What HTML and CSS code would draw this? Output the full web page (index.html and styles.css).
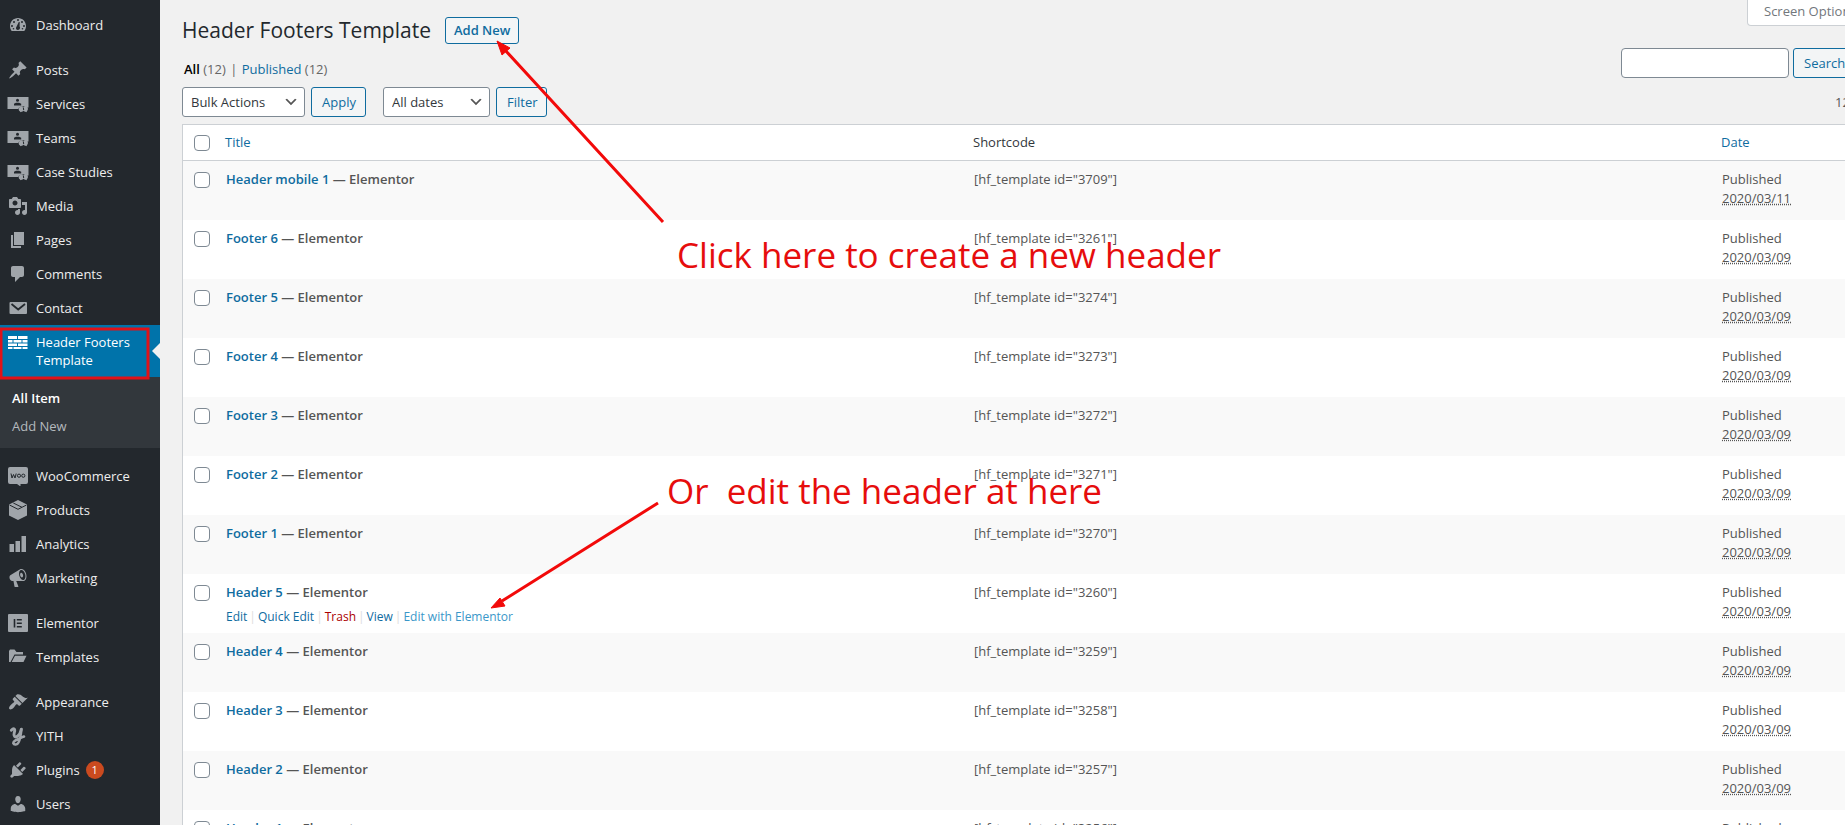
FILE: index.html
```html
<!DOCTYPE html>
<html lang="en">
<head>
<meta charset="utf-8">
<title>Header Footers Template</title>
<link rel="stylesheet" href="styles.css">
</head>
<body>
<svg class="sprite" aria-hidden="true">
  <symbol id="people" viewBox="0 0 22 20">
    <path fill-rule="evenodd" d="M.5 3h21v10.500H18.500a2.600 2.600 0 0 0-3.500-.7a3 3 0 0 0-3.700 2.200H.500z"/>
    <circle class="hole" cx="10.500" cy="6.300" r="1.500"/>
    <path class="hole" d="M7 11.500V9.800l2-1h3l2.200 1v1.700z"/>
    <circle cx="14.300" cy="15" r="2.600"/><circle cx="18.300" cy="14.800" r="2.600"/>
    <path d="M12.500 16l1 2.300 2.200-1.300zM17 17l2.700 1.300.2-2z"/>
    <path class="line" d="M16.300 13.500l.4 2.500"/>
  </symbol>
</svg>
<div class="shell">
  <nav class="sidebar" aria-label="Admin menu">
    <a class="item" href="#"><svg class="icon" viewBox="0 0 20 20"><path fill-rule="evenodd" d="M3.760 16h12.480c1.100-1.370 1.760-3.110 1.760-5 0-4.420-3.580-8-8-8s-8 3.580-8 8c0 1.890.66 3.630 1.760 5zM10 4a1 1 0 1 1 0 2 1 1 0 0 1 0-2zM6 6a1 1 0 1 1 0 2 1 1 0 0 1 0-2zM14 6a1 1 0 1 1 0 2 1 1 0 0 1 0-2zM4 10a1 1 0 1 1 0 2 1 1 0 0 1 0-2zM16 10a1 1 0 1 1 0 2 1 1 0 0 1 0-2zM10.800 7l.9.100-.1 4.500c1 .900.400 3.400-1.600 3.400s-2.600-2.200-1.500-3.300zM5.500 13a.8.800 0 1 1 0 1.600.8.800 0 0 1 0-1.600zM14.500 13a.8.800 0 1 1 0 1.600.8.800 0 0 1 0-1.600z"/></svg>Dashboard</a>
    <div class="sep"></div>
    <a class="item" href="#"><svg class="icon" viewBox="0 0 20 20"><path d="M10.440 3.020l1.820-1.820 6.360 6.350-1.830 1.820c-1.050-.68-2.480-.57-3.410.36l-.75.75c-.92.93-1.040 2.350-.35 3.410l-1.830 1.820-2.410-2.410-2.800 2.790c-.42.42-3.380 2.710-3.800 2.290s1.860-3.390 2.280-3.810l2.790-2.790L4.100 9.360l1.830-1.820c1.050.69 2.480.57 3.400-.36l.75-.75c.93-.92 1.050-2.350.36-3.410z"/></svg>Posts</a>
    <a class="item" href="#"><svg class="icon wide"><use href="#people"/></svg>Services</a>
    <a class="item" href="#"><svg class="icon wide"><use href="#people"/></svg>Teams</a>
    <a class="item" href="#"><svg class="icon wide"><use href="#people"/></svg>Case Studies</a>
    <a class="item" href="#"><svg class="icon" viewBox="0 0 20 20"><path d="M13 11V4c0-.55-.45-1-1-1h-1.670L9 1H5L3.670 3H2c-.55 0-1 .45-1 1v7c0 .55.45 1 1 1h10c.55 0 1-.45 1-1zM7 4.500c1.380 0 2.500 1.120 2.500 2.500S8.380 9.500 7 9.500 4.500 8.380 4.500 7 5.620 4.500 7 4.500zM14 6h5v10.500c0 1.380-1.120 2.500-2.500 2.500S14 17.880 14 16.500s1.120-2.500 2.500-2.500c.17 0 .34.020.5.050V9h-3V6zm-4 8.050V13h2v3.500c0 1.380-1.120 2.500-2.500 2.500S7 17.880 7 16.500 8.120 14 9.500 14c.17 0 .34.020.5.050z"/></svg>Media</a>
    <a class="item" href="#"><svg class="icon" viewBox="0 0 20 20"><path d="M6 15V2h10v13H6zm-1 1h8v2H3V5h2v11z"/></svg>Pages</a>
    <a class="item" href="#"><svg class="icon" viewBox="0 0 20 20"><path d="M5 2h9c1.100 0 2 .9 2 2v7c0 1.100-.9 2-2 2h-2l-5 5v-5H5c-1.100 0-2-.9-2-2V4c0-1.100.9-2 2-2z"/></svg>Comments</a>
    <a class="item" href="#"><svg class="icon" viewBox="0 0 20 20"><rect x="1.500" y="4" width="17.500" height="12" rx="1"/><path class="line" stroke-width="1.800" d="M3.500 6l6.700 5.500L17 6"/></svg>Contact</a>
    <a class="item current" href="#" aria-current="page"><svg class="icon" viewBox="0 0 20 20"><path d="M0 4h9v3H0zM10 4h9.500v3H10zM0 8h4.500v2.500H0zM5.500 8h8v2.500h-8zM14.500 8h5v2.500h-5zM0 11.500h9V14H0zM10 11.500h9.500V14H10zM0 15h4.500v2H0zM5.500 15h8v2h-8zM14.500 15h5v2h-5z"/></svg>Header Footers Template</a>
    <div class="submenu">
      <a class="sub active" href="#">All Item</a>
      <a class="sub" href="#">Add New</a>
    </div>
    <div class="sep"></div>
    <a class="item" href="#"><svg class="icon" viewBox="0 0 20 20"><path d="M2 1h16a2 2 0 0 1 2 2v13a2 2 0 0 1-2 2h-5.500v2.500L9 18H2a2 2 0 0 1-2-2V3a2 2 0 0 1 2-2z"/><path class="line" d="M3 7.500l1 4.500 1.500-3.500L7 12l1.200-4.500"/><circle class="line" cx="11" cy="9.700" r="1.600"/><circle class="line" cx="15.300" cy="9.700" r="1.600"/></svg>WooCommerce</a>
    <a class="item" href="#"><svg class="icon" viewBox="0 0 20 20"><path d="M10 0l9 4.500v11L10 20l-9-4.500v-11z"/><path class="line" d="M1.500 5L10 9.300 18.500 5M5.300 3l8.700 4.300"/></svg>Products</a>
    <a class="item" href="#"><svg class="icon" viewBox="0 0 20 20"><path d="M18 18V2h-4.500v16zM12 18V7H7.500v11zM6 18v-8H1.500v8z"/></svg>Analytics</a>
    <a class="item" href="#"><svg class="icon" viewBox="0 0 20 20"><path fill-rule="evenodd" d="M18.150 5.940c.46 1.620.38 3.220-.02 4.480-.42 1.280-1.260 2.180-2.300 2.480-.16.060-.26.060-.4.060-.06.020-.12.020-.18.020-.06.020-.14.020-.22.020h-6.800l2.220 5.500c.02.140-.06.260-.14.340-.08.100-.24.160-.34.160H6.950c-.1 0-.26-.06-.34-.16-.08-.08-.16-.2-.14-.34l-1-5.500H4.250l-.02-.02c-.5.060-1.080-.18-1.540-.62s-.88-1.080-1.060-1.880c-.24-.8-.2-1.560-.02-2.200.18-.62.58-1.080 1.060-1.300l.02-.02 9-5.400c.1-.06.18-.1.240-.16.060-.04.140-.08.240-.12.160-.08.280-.12.500-.18 1.040-.3 2.240.1 3.220.98s1.840 2.240 2.260 3.860zm-2.580 5.980h-.02c.4-.1.740-.34 1.040-.7.580-.7.860-1.760.860-3.040 0-.64-.1-1.300-.28-1.980-.34-1.360-1.020-2.500-1.780-3.240s-1.680-1.100-2.460-.88c-.82.220-1.400.960-1.700 2-.32 1.040-.28 2.360.060 3.720.38 1.360 1 2.500 1.800 3.240.78.740 1.620 1.100 2.480.880zm-2.540-7.080c.22-.04.42-.02.620.040.38.160.76.480 1.020 1s.42 1.200.42 1.780c0 .3-.04.560-.12.800-.18.480-.44.840-.86.940-.34.100-.8-.06-1.140-.4s-.64-.86-.78-1.500c-.18-.62-.12-1.240.02-1.720s.48-.84.820-.94z"/></svg>Marketing</a>
    <div class="sep"></div>
    <a class="item" href="#"><svg class="icon" viewBox="0 0 20 20"><path fill-rule="evenodd" d="M1 1h18a1 1 0 0 1 1 1v16a1 1 0 0 1-1 1H1a1 1 0 0 1-1-1V2a1 1 0 0 1 1-1zM5.700 6v8.500h1.600V6zM8.800 6v1.600h5V6zM8.800 9.500v1.600h5V9.500zM8.800 12.900v1.600h5v-1.600z"/></svg>Elementor</a>
    <a class="item" href="#"><svg class="icon" viewBox="0 0 20 20"><path d="M1 15V4l1-1.500h4.500L8.500 5H15v2.500H6.500L2.500 15zM7 8.700h11.500L15.500 15H3.700z"/></svg>Templates</a>
    <div class="sep"></div>
    <a class="item" href="#"><svg class="icon" viewBox="0 0 20 20"><path d="M14.480 11.060L7.410 3.990l1.500-1.500c.5-.56 2.300-.47 3.510.32 1.210.8 1.430 1.280 2.910 2.100 1.180.64 2.450 1.260 4.450.85zm-.71.71L6.700 4.700 4.930 6.470c-.39.39-.39 1.020 0 1.410l1.060 1.060c.39.39.39 1.030 0 1.420-.6.6-1.430 1.110-2.210 1.690-.35.26-.7.53-1.010.84C1.430 14.230.4 16.080 1.400 17.070c.99 1 2.840-.03 4.180-1.360.31-.31.58-.66.85-1.020.57-.78 1.080-1.610 1.690-2.210.39-.39 1.020-.39 1.410 0l1.060 1.060c.39.39 1.020.39 1.410 0z"/></svg>Appearance</a>
    <a class="item" href="#"><svg class="icon" viewBox="0 0 20 20"><path class="pen" stroke-width="2.900" d="M3.300 4.200C6 1.500 7.500 3 6.300 6.500C5.300 10 6.800 12 9.500 10.200C12 8.500 12.800 5.500 13.200 3.500"/><path class="pen" stroke-width="2.500" d="M13.500 3C13 8 12.500 13 10.500 16.500C9.200 19 6 19.200 5.300 17.300C5 15 9 13.500 16 10.500"/></svg>YITH</a>
    <a class="item" href="#"><svg class="icon" viewBox="0 0 20 20"><path d="M13.110 4.360L9.870 7.600 8 5.730l3.240-3.240c.35-.34 1.050-.2 1.560.32.52.51.66 1.210.31 1.550zm-8 1.770l.91-1.120 9.010 9.010-1.190.84c-.71.71-2.630 1.160-3.820 1.160H6.140L4.900 17.260c-.59.59-1.540.59-2.120 0-.59-.58-.59-1.530 0-2.120l1.240-1.240v-3.880c0-1.130.4-3.190 1.090-3.890zm7.260 3.970l3.240-3.240c.34-.35 1.040-.21 1.550.31.52.51.66 1.210.31 1.550l-3.240 3.250z"/></svg>Plugins<span class="badge">1</span></a>
    <a class="item" href="#"><svg class="icon" viewBox="0 0 20 20"><path d="M10 9.250c-2.270 0-2.730-3.440-2.730-3.440C7 4.020 7.820 2 9.970 2c2.160 0 2.980 2.020 2.710 3.810 0 0-.41 3.440-2.680 3.440zm0 2.570L12.720 10c2.390 0 4.520 2.330 4.520 4.530v2.490s-3.650 1.130-7.240 1.130c-3.650 0-7.240-1.130-7.240-1.130v-2.490c0-2.250 1.940-4.480 4.470-4.480z"/></svg>Users</a>
  </nav>

  <main class="content">
    <header class="top">
      <div class="heading"><h1>Header Footers Template</h1><a class="button add" href="#">Add New</a></div>
      <button class="tab" type="button">Screen Options</button>
    </header>
    <div class="views">
      <p class="counts"><a class="all" href="#">All</a> (12) <span>|</span> <a href="#">Published</a> (12)</p>
      <form class="search"><input type="search" aria-label="Search templates"><button class="button" type="button">Search</button></form>
    </div>
    <div class="filters">
      <select class="bulk" aria-label="Bulk action"><option>Bulk Actions</option></select>
      <button class="button apply" type="button">Apply</button>
      <select class="dates" aria-label="Filter by date"><option>All dates</option></select>
      <button class="button filter" type="button">Filter</button>
      <span class="total">12 items</span>
    </div>
    <table>
      <colgroup><col class="c-check"><col><col><col class="c-date"></colgroup>
      <thead><tr><th class="check"><input type="checkbox" aria-label="Select all"></th><th><a href="#">Title</a></th><th>Shortcode</th><th><a href="#">Date</a></th></tr></thead>
      <tbody>
        <tr><td class="check"><input type="checkbox" aria-label="Select Header mobile 1"></td><td class="name"><a href="#">Header mobile 1</a> — Elementor</td><td class="code">[hf_template id="3709"]</td><td>Published<br><abbr>2020/03/11</abbr></td></tr>
        <tr><td class="check"><input type="checkbox" aria-label="Select Footer 6"></td><td class="name"><a href="#">Footer 6</a> — Elementor</td><td class="code">[hf_template id="3261"]</td><td>Published<br><abbr>2020/03/09</abbr></td></tr>
        <tr><td class="check"><input type="checkbox" aria-label="Select Footer 5"></td><td class="name"><a href="#">Footer 5</a> — Elementor</td><td class="code">[hf_template id="3274"]</td><td>Published<br><abbr>2020/03/09</abbr></td></tr>
        <tr><td class="check"><input type="checkbox" aria-label="Select Footer 4"></td><td class="name"><a href="#">Footer 4</a> — Elementor</td><td class="code">[hf_template id="3273"]</td><td>Published<br><abbr>2020/03/09</abbr></td></tr>
        <tr><td class="check"><input type="checkbox" aria-label="Select Footer 3"></td><td class="name"><a href="#">Footer 3</a> — Elementor</td><td class="code">[hf_template id="3272"]</td><td>Published<br><abbr>2020/03/09</abbr></td></tr>
        <tr><td class="check"><input type="checkbox" aria-label="Select Footer 2"></td><td class="name"><a href="#">Footer 2</a> — Elementor</td><td class="code">[hf_template id="3271"]</td><td>Published<br><abbr>2020/03/09</abbr></td></tr>
        <tr><td class="check"><input type="checkbox" aria-label="Select Footer 1"></td><td class="name"><a href="#">Footer 1</a> — Elementor</td><td class="code">[hf_template id="3270"]</td><td>Published<br><abbr>2020/03/09</abbr></td></tr>
        <tr><td class="check"><input type="checkbox" aria-label="Select Header 5"></td><td class="name"><a href="#">Header 5</a> — Elementor<div class="actions"><a href="#">Edit</a><i>|</i><a href="#">Quick Edit</a><i>|</i><a class="trash" href="#">Trash</a><i>|</i><a href="#">View</a><i>|</i><a class="hover" href="#">Edit with Elementor</a></div></td><td class="code">[hf_template id="3260"]</td><td>Published<br><abbr>2020/03/09</abbr></td></tr>
        <tr><td class="check"><input type="checkbox" aria-label="Select Header 4"></td><td class="name"><a href="#">Header 4</a> — Elementor</td><td class="code">[hf_template id="3259"]</td><td>Published<br><abbr>2020/03/09</abbr></td></tr>
        <tr><td class="check"><input type="checkbox" aria-label="Select Header 3"></td><td class="name"><a href="#">Header 3</a> — Elementor</td><td class="code">[hf_template id="3258"]</td><td>Published<br><abbr>2020/03/09</abbr></td></tr>
        <tr><td class="check"><input type="checkbox" aria-label="Select Header 2"></td><td class="name"><a href="#">Header 2</a> — Elementor</td><td class="code">[hf_template id="3257"]</td><td>Published<br><abbr>2020/03/09</abbr></td></tr>
        <tr><td class="check"><input type="checkbox" aria-label="Select Header 1"></td><td class="name"><a href="#">Header 1</a> — Elementor</td><td class="code">[hf_template id="3256"]</td><td>Published<br><abbr>2020/03/09</abbr></td></tr>
      </tbody>
    </table>
  </main>
</div>
<svg class="notes" width="1300" height="700">
  <rect x="1" y="329" width="147" height="49" fill="none" stroke="#e01218" stroke-width="3"/>
  <path d="M663 222L505 50M658 503L502 601" fill="none" stroke="#f20a0a" stroke-width="3"/>
  <path class="tip" d="M497 41l13 7-8 7z"/>
  <path class="tip" d="M491 608l14-2-5-8z"/>
  <text x="677" y="268">Click here to create a new header</text>
  <text x="667" y="504">Or&nbsp; edit the header at here</text>
</svg>
</body>
</html>
```
FILE: styles.css
```css
* { box-sizing: border-box; }
body {
  margin: 0;
  height: 100vh;
  overflow: hidden;
  position: relative;
  background: #f1f1f1;
  color: #444;
  font: 13px/19px "Open Sans", "Noto Sans", sans-serif;
}
a { color: #0f6c9f; text-decoration: none; }
button, input, select { font: inherit; margin: 0; }
.sprite { position: absolute; width: 0; height: 0; }

/* The admin area runs on past the right edge of the window. */
.shell { display: flex; width: calc(100% + 75px); min-height: 100%; }

.sidebar { flex: 0 0 160px; padding-top: 8px; background: #23282d; }
.item {
  display: flex;
  align-items: flex-start;
  gap: 8px;
  padding: 8px;
  line-height: 18px;
  color: #eee;
}
.icon { flex: none; width: 20px; height: 20px; margin: -1px 0; fill: #a0a5aa; }
.icon.wide { width: 22px; margin-left: -1px; margin-right: -1px; }
.hole { fill: #23282d; }
.line { fill: none; stroke: #23282d; }
.pen { fill: none; stroke: #a0a5aa; stroke-linecap: round; }
.sep { height: 11px; }
.current { position: relative; background: #0073aa; color: #fff; }
.current .icon { fill: #fff; }
.current::after {
  content: "";
  position: absolute;
  right: 0;
  top: 50%;
  margin-top: -8px;
  border: 8px solid transparent;
  border-left: 0;
  border-right-color: #f1f1f1;
}
.submenu { padding: 7px 0 8px; background: #32373c; }
.sub { display: block; padding: 5px 12px; line-height: 18px; color: #b4b9be; }
.sub.active { color: #fff; font-weight: 600; }
.badge {
  width: 18px;
  height: 18px;
  margin-left: -2px;
  border-radius: 9px;
  background: #ca4a1f;
  color: #fff;
  font-size: 11px;
  text-align: center;
}

.content { flex: 1; min-width: 0; padding: 0 20px 0 22px; }
.top { display: flex; justify-content: space-between; align-items: flex-start; }
.heading { display: flex; align-items: center; gap: 14px; padding-top: 17px; }
h1 { margin: 0; font-size: 21px; line-height: 27px; font-weight: 400; color: #23282d; }
.button {
  height: 30px;
  padding: 0 10px;
  border: 1px solid #0f6c9f;
  border-radius: 3px;
  background: #f3f5f6;
  color: #0f6c9f;
  white-space: nowrap;
}
.button.add { height: 27px; padding: 0 8px; line-height: 25px; font-weight: 600; }
.tab {
  width: 153px;
  height: 26px;
  padding: 0 16px 2px;
  border: 1px solid #ccd0d4;
  border-top: 0;
  border-radius: 0 0 4px 4px;
  background: #fff;
  color: #72777c;
  text-align: left;
}
.views { display: flex; justify-content: space-between; align-items: flex-end; padding-top: 4px; }
.counts { margin: 0; padding-left: 2px; line-height: 18px; color: #666; }
.counts span { padding: 0 1px; }
.all { color: #000; font-weight: 600; }
.search { display: flex; gap: 4px; }
.search input {
  width: 168px;
  height: 30px;
  border: 1px solid #7e8993;
  border-radius: 4px;
  background: #fff;
}
.search .button { width: 107px; text-align: left; }
.filters { display: flex; gap: 6px; align-items: center; padding: 9px 0 7px; }
select {
  height: 30px;
  padding: 0 24px 0 8px;
  border: 1px solid #7e8993;
  border-radius: 3px;
  appearance: none;
  color: #32373c;
  background: #fff url("data:image/svg+xml,%3Csvg xmlns='http://www.w3.org/2000/svg' viewBox='0 0 20 20'%3E%3Cpath d='M5 6l5 5 5-5 2 1-7 7-7-7z' fill='%23555'/%3E%3C/svg%3E") no-repeat right 5px center / 16px;
}
.bulk { width: 123px; }
.dates { width: 107px; margin-left: 11px; }
.apply { width: 55px; }
.filter { width: 51px; }
.total { width: 65px; margin-left: auto; color: #555; }

table {
  width: 100%;
  table-layout: fixed;
  border: 1px solid #ccd0d4;
  border-spacing: 0;
  background: #fff;
}
.c-check { width: 34px; }
.c-date { width: 186px; }
th { padding: 8px; border-bottom: 1px solid #ccd0d4; font-weight: 400; text-align: left; color: #32373c; }
td { padding: 9px 9px 7px; height: 59px; vertical-align: top; color: #555; }
tbody tr:nth-child(odd) { background: #f9f9f9; }
.check { padding: 11px 0 0 11px; line-height: 0; }
thead .check { padding: 0 0 0 11px; }
input[type="checkbox"] {
  appearance: none;
  width: 16px;
  height: 16px;
  border: 1px solid #7e8993;
  border-radius: 4px;
  background: #fff;
}
.name { font-weight: 600; }
.code { font-weight: 500; }
.actions { display: flex; gap: 2px; margin-top: 5px; font-weight: 400; font-size: 12px; }
.actions i { color: #ddd; font-style: normal; }
.actions .trash { color: #a00; }
.actions .hover { color: #3a97c9; }
abbr { text-decoration: underline dotted; }

.notes { position: absolute; left: 0; top: 0; pointer-events: none; }
.notes text { font-size: 35px; fill: #e60d0d; }
.tip { fill: #f20a0a; stroke: #f20a0a; }
```
